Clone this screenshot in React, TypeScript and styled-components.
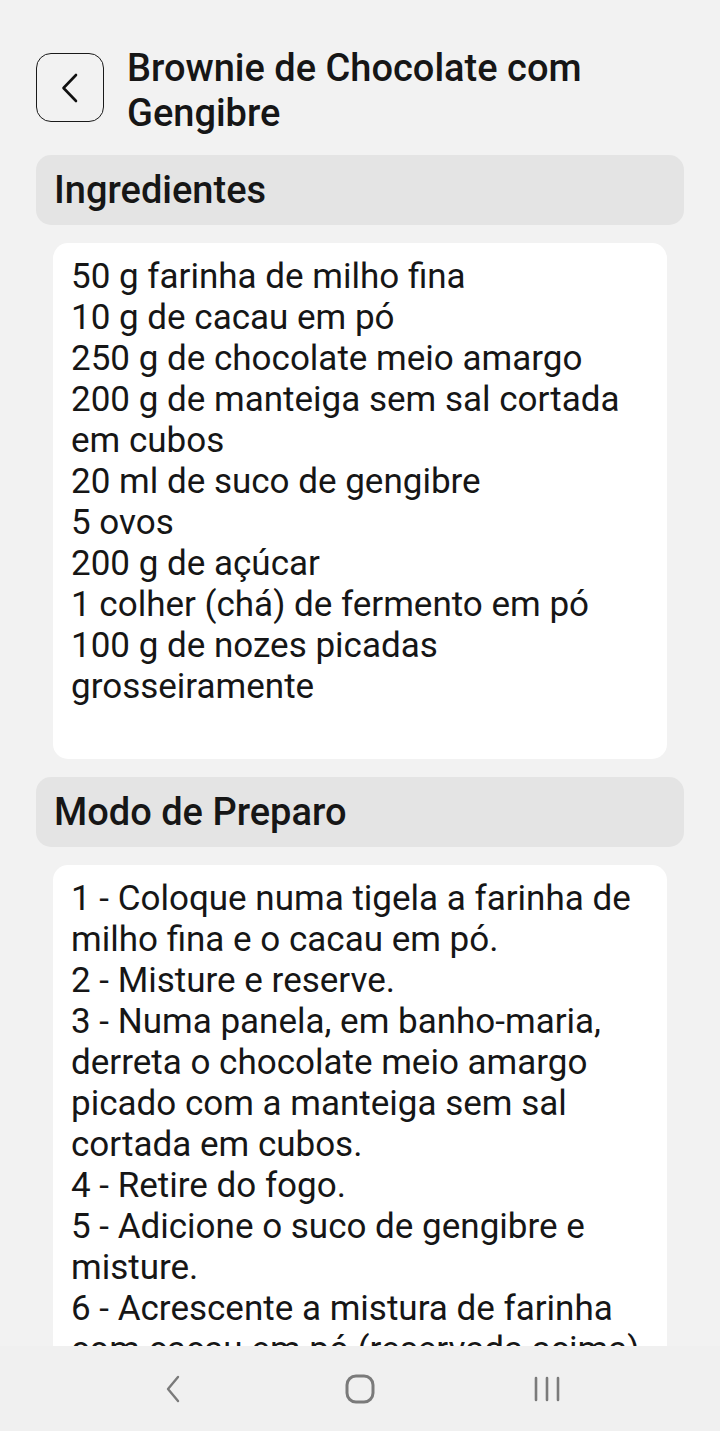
import React from "react";
import styled, { createGlobalStyle } from "styled-components";

const ingredients = [
  "50 g farinha de milho fina",
  "10 g de cacau em pó",
  "250 g de chocolate meio amargo",
  "200 g de manteiga sem sal cortada em cubos",
  "20 ml de suco de gengibre",
  "5 ovos",
  "200 g de açúcar",
  "1 colher (chá) de fermento em pó",
  "100 g de nozes picadas grosseiramente",
];

const steps = [
  "1 - Coloque numa tigela a farinha de milho fina e o cacau em pó.",
  "2 - Misture e reserve.",
  "3 - Numa panela, em banho-maria, derreta o chocolate meio amargo picado com a manteiga sem sal cortada em cubos.",
  "4 - Retire do fogo.",
  "5 - Adicione o suco de gengibre e misture.",
  "6 - Acrescente a mistura de farinha com cacau em pó (reservada acima) e misture bem.",
  "7 - Em outra tigela, bata os ovos com o açúcar até obter um creme claro.",
];

const GlobalStyle = createGlobalStyle`
  html, body {
    margin: 0;
    padding: 0;
    background: #f2f2f2;
  }
  body {
    font-family: Roboto, "Noto Sans", sans-serif;
    color: #161616;
  }
`;

const Screen = styled.div`
  height: 1431px;
  display: flex;
  flex-direction: column;
  overflow: hidden;
  background: #f2f2f2;
`;

const Content = styled.div`
  flex: 1;
  overflow: hidden;
  padding: 46px 36px 0;
  display: flex;
  flex-direction: column;
`;

const Header = styled.div`
  display: flex;
  align-items: flex-start;
  gap: 23px;
  margin-bottom: 19px;
`;

const BackButton = styled.button`
  flex: none;
  width: 68px;
  height: 69px;
  margin-top: 7px;
  border: 1.5px solid #1a1a1a;
  border-radius: 15px;
  background: transparent;
  display: flex;
  align-items: center;
  justify-content: center;
  padding: 0;
`;

const Title = styled.h1`
  margin: 0;
  font-size: 38px;
  line-height: 45px;
  font-weight: 500;
  color: #161616;
`;

const SectionHeader = styled.div`
  flex: none;
  height: 70px;
  border-radius: 15px;
  background: #e4e4e4;
  display: flex;
  align-items: center;
  padding: 0 18px;
  font-size: 38px;
  font-weight: 500;
  margin-bottom: 18px;
`;

const Card = styled.div`
  margin: 0 17px 18px;
  background: #fff;
  border-radius: 15px;
  padding: ${(p) => (p.$open ? "13px 18px 0" : "13px 18px 52px")};
  font-size: 35px;
  line-height: 41px;
  flex: none;
`;

const Line = styled.div``;

const NavBar = styled.div`
  flex: none;
  height: 85px;
  background: #f0f0f0;
  display: flex;
  align-items: center;
  justify-content: center;
  gap: 127px;
`;

const NavIcon = styled.div`
  width: 60px;
  height: 40px;
  display: flex;
  align-items: center;
  justify-content: center;
`;

export default function App() {
  return (
    <Screen>
      <GlobalStyle />
      <Content>
        <Header>
          <BackButton>
            <svg width="20" height="30" viewBox="0 0 20 30">
              <path d="M16 2 L3.5 15 L16 28" fill="none" stroke="#111" strokeWidth="2.6" strokeLinecap="round" strokeLinejoin="round" />
            </svg>
          </BackButton>
          <Title>Brownie de Chocolate com Gengibre</Title>
        </Header>
        <SectionHeader>Ingredientes</SectionHeader>
        <Card>
          {ingredients.map((i) => (
            <Line key={i}>{i}</Line>
          ))}
        </Card>
        <SectionHeader>Modo de Preparo</SectionHeader>
        <Card $open>
          {steps.map((s) => (
            <Line key={s}>{s}</Line>
          ))}
        </Card>
      </Content>
      <NavBar>
        <NavIcon>
          <svg width="20" height="30" viewBox="0 0 20 30">
            <path d="M15 3 L5 15 L15 27" fill="none" stroke="#7a7a7a" strokeWidth="2.4" strokeLinecap="round" strokeLinejoin="round" />
          </svg>
        </NavIcon>
        <NavIcon>
          <svg width="32" height="32" viewBox="0 0 32 32">
            <rect x="3" y="3" width="26" height="26" rx="9" fill="none" stroke="#7a7a7a" strokeWidth="3" />
          </svg>
        </NavIcon>
        <NavIcon>
          <svg width="30" height="28" viewBox="0 0 30 28">
            <path d="M4 3 V25 M15 3 V25 M26 3 V25" fill="none" stroke="#7a7a7a" strokeWidth="2.6" strokeLinecap="round" />
          </svg>
        </NavIcon>
      </NavBar>
    </Screen>
  );
}
